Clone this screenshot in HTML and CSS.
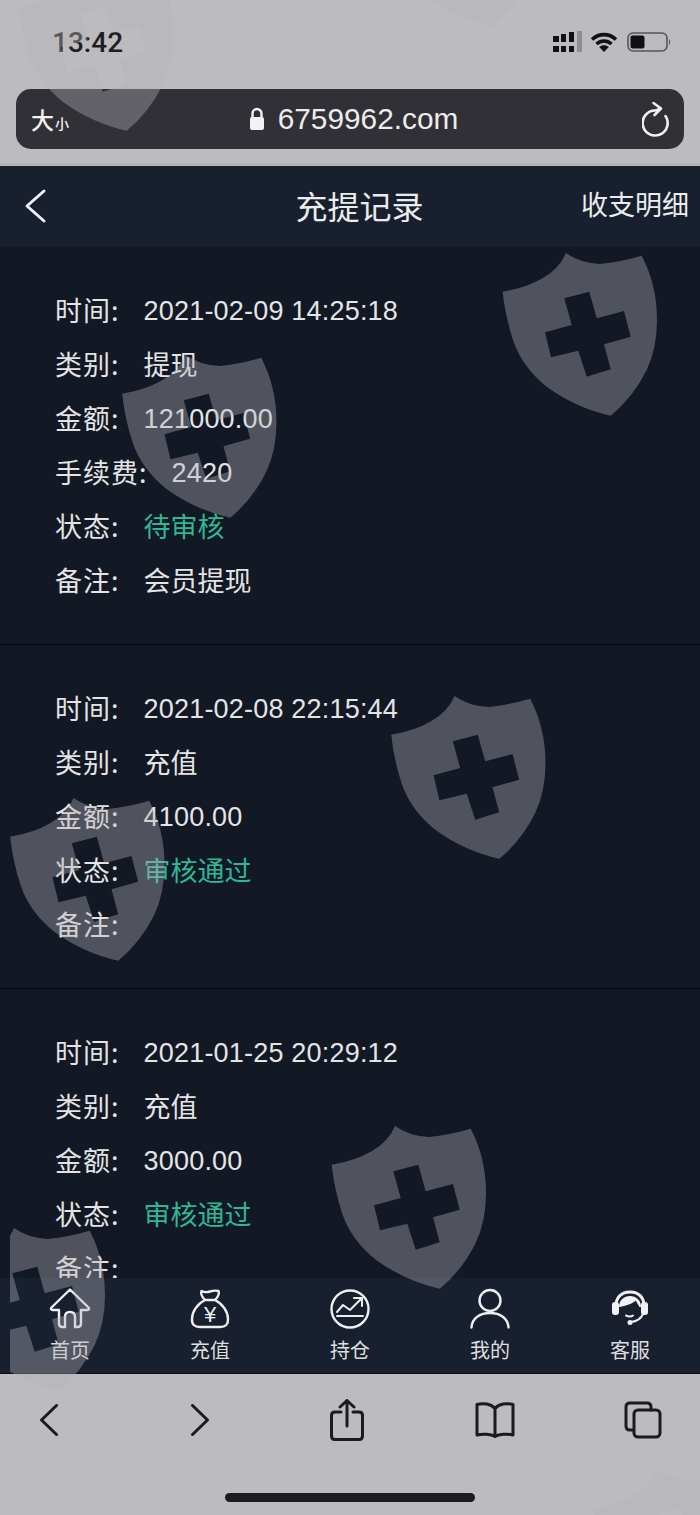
FILE: index.html
```html
<!DOCTYPE html>
<html lang="zh-CN">
<head>
<meta charset="utf-8">
<title>充提记录</title>
<link rel="stylesheet" href="styles.css">
</head>
<body>
<div class="phone">
  <div class="browser-top">
    <div class="status">
      <span class="clock">13:42</span>
      <div class="status-icons">
        <svg class="ic-signal" width="30" height="22" viewBox="0 0 30 22"><path class="solid" d="M0 5h6v6H0zM0 15h6v6H0zM8 3h5v8H8zM8 15h5v6H8zM16 1h5v10h-5zM16 15h5v6h-5z"/><path class="faint" d="M24 0h5v21h-5z"/></svg>
        <svg class="ic-wifi" width="28" height="22" viewBox="0 0 28 22"><path class="stroke-dark" d="M2 8.500C9 2 19 2 26 8.500M6.500 13C11 9 17 9 21.500 13"/><path class="solid" d="M14 21l-4.800-5c3-2.200 6.600-2.200 9.600 0z"/></svg>
        <svg class="ic-battery" width="44" height="22" viewBox="0 0 44 22"><rect class="bat-shell" x="1" y="2" width="39" height="18" rx="5"/><rect class="solid" x="3.500" y="4.500" width="14" height="13" rx="2"/><path class="faint-dark" d="M42 8v6c1.500-.6 1.500-5.400 0-6z"/></svg>
      </div>
    </div>
    <div class="urlbar">
      <span class="fontsize"><span class="fs-big">大</span><span class="fs-small">小</span></span>
      <div class="address">
        <svg width="16" height="24" viewBox="0 0 16 24"><path class="lock-arc" d="M3.500 11V6.500a4.500 4.500 0 0 1 9 0V11"/><rect class="white-fill" x="1" y="10" width="14" height="13" rx="2"/></svg>
        <span>6759962.com</span>
      </div>
      <svg class="reload" width="28" height="36" viewBox="0 0 28 36"><path class="line-white" d="M18.500 7.500C16.500 8 15 9.500 13 9.500A12.500 12.500 0 1 0 23.500 15"/><path class="line-white" d="M11.500 2l7.500 5.500-6.500 6.500"/></svg>
    </div>
  </div>

  <header class="topbar">
    <svg class="back" width="24" height="36" viewBox="0 0 24 36"><path class="line-white wide" d="M21 3L4 18l17 15"/></svg>
    <h1>充提记录</h1>
    <span class="topbar-link">收支明细</span>
  </header>

  <main class="records">
    <section class="record">
      <div class="row"><span class="label">时间:</span><span class="value">2021-02-09 14:25:18</span></div>
      <div class="row"><span class="label">类别:</span><span class="value cjk">提现</span></div>
      <div class="row"><span class="label">金额:</span><span class="value">121000.00</span></div>
      <div class="row"><span class="label">手续费:</span><span class="value">2420</span></div>
      <div class="row"><span class="label">状态:</span><span class="value cjk ok">待审核</span></div>
      <div class="row"><span class="label">备注:</span><span class="value cjk">会员提现</span></div>
    </section>
    <section class="record">
      <div class="row"><span class="label">时间:</span><span class="value">2021-02-08 22:15:44</span></div>
      <div class="row"><span class="label">类别:</span><span class="value cjk">充值</span></div>
      <div class="row"><span class="label">金额:</span><span class="value">4100.00</span></div>
      <div class="row"><span class="label">状态:</span><span class="value cjk ok">审核通过</span></div>
      <div class="row"><span class="label">备注:</span><span class="value"></span></div>
    </section>
    <section class="record">
      <div class="row"><span class="label">时间:</span><span class="value">2021-01-25 20:29:12</span></div>
      <div class="row"><span class="label">类别:</span><span class="value cjk">充值</span></div>
      <div class="row"><span class="label">金额:</span><span class="value">3000.00</span></div>
      <div class="row"><span class="label">状态:</span><span class="value cjk ok">审核通过</span></div>
      <div class="row"><span class="label">备注:</span><span class="value"></span></div>
    </section>
  </main>

  <nav class="tabbar">
    <div class="tab">
      <svg width="42" height="42" viewBox="0 0 42 42"><path class="tab-line" d="M21 1.500L2.500 19.500q-1.500 2 1 2.500H10V35.500q0 3.500 3.500 3.500H16V29q0-5 5-5t5 5v10h2.500q3.500 0 3.500-3.500V22h6.500q2.500-.5 1-2.500z"/></svg>
      <span>首页</span>
    </div>
    <div class="tab">
      <svg width="42" height="42" viewBox="0 0 42 42"><path class="tab-line" d="M12.500 3Q16 5 21 3.500T29.500 3Q31 7 26 12C34 16 39 24 39 31Q39.500 39 31 39H11Q2.500 39 3 31C3 24 8 16 16 12Q11 7 12.500 3zM16 12h10"/><text class="yen" x="21" y="34">¥</text></svg>
      <span>充值</span>
    </div>
    <div class="tab">
      <svg width="42" height="42" viewBox="0 0 42 42"><circle class="tab-line" cx="21" cy="21" r="18.500"/><path class="tab-line thin" d="M8 28h26M8 24l6-7 7 5 12-12M25 10h8v8"/></svg>
      <span>持仓</span>
    </div>
    <div class="tab">
      <svg width="42" height="42" viewBox="0 0 42 42"><circle class="tab-line" cx="21" cy="12.500" r="10.500"/><path class="tab-line" d="M2.500 39.500C3 30 11 25 21 25s18 5 18.500 14.500"/></svg>
      <span>我的</span>
    </div>
    <div class="tab">
      <svg width="42" height="42" viewBox="0 0 42 42"><path class="tab-line bold" d="M7 20C6 9 13 4 21 4s15 5 14 16"/><rect class="white-fill" x="3" y="14" width="7" height="13" rx="3"/><rect class="white-fill" x="32" y="14" width="7" height="13" rx="3"/><path class="white-fill" d="M10 19C10 12 15 8 21 8s11 4 11 11z"/><path class="head" d="M11 19C14 18 22 17 27 12.500 28 16 31 18 31 21 31 27 27 32 21 32S11 27 11 21z"/><path class="tab-line thin" d="M17 27.500q4 2 7 0M34 26q-3 7-12 8"/><circle class="white-fill" cx="21" cy="34.500" r="2.500"/></svg>
      <span>客服</span>
    </div>
  </nav>

  <div class="browser-bottom">
    <div class="tools">
      <svg class="tool-back" width="20" height="32" viewBox="0 0 20 32"><path class="line-dark" d="M17.500 1.500L2.500 16l15 14.500"/></svg>
      <svg class="tool-forward" width="20" height="32" viewBox="0 0 20 32"><path class="line-dark" d="M2.500 1.500l15 14.500-15 14.500"/></svg>
      <svg width="34" height="42" viewBox="0 0 34 42"><path class="line-dark" d="M11 13H5q-3.500 0-3.500 3.500V37Q1.500 40.500 5 40.500h24q3.500 0 3.500-3.500V16.500Q32.500 13 29 13h-6M17 27V2M10 8l7-6.500L24 8"/></svg>
      <svg width="40" height="36" viewBox="0 0 40 36"><path class="line-dark" d="M20 6.500C16 1.500 8 1 2 2.500V33c6-1.500 14-1 18 1.500 4-2.500 12-3 18-1.500V2.500C32 1 24 1.500 20 6.500zM20 6.500V34"/></svg>
      <svg width="38" height="38" viewBox="0 0 38 38"><path class="line-dark" d="M9 29H6q-4 0-4-4V6q0-4 4-4h17q4 0 4 4v3"/><rect class="line-dark" x="10" y="9" width="26" height="27" rx="4"/></svg>
    </div>
    <div class="home-indicator"></div>
  </div>

  <svg class="watermarks" width="700" height="1515" viewBox="0 0 700 1515" aria-hidden="true">
    <defs>
      <symbol id="shield" width="160" height="170" viewBox="0 0 160 170">
        <path fill-rule="evenodd" d="M66 3Q80 13 100 14q20-2 41.700-8.300Q157 35 157 70q0 28-10.300 50-14 28-36 45.700Q76 158 46.700 136.700 22 117 13 90 5 65 2.700 41.700 26 38 43 28 60 18 66 3zM64.300 48.300L89.300 41.700 96.700 68.300 124 61 130.700 86.700 104 94.300 110.700 119.300 86.700 126.700 78.300 100.700 51 107.300 45 82.300 71.700 75z"/>
      </symbol>
      <clipPath id="tile-edge"><rect x="10" y="1200" width="200" height="315"/></clipPath>
    </defs>
    <use href="#shield" x="16" y="-35"/>
    <use href="#shield" x="381" y="-139"/>
    <use href="#shield" x="500" y="250"/>
    <use href="#shield" x="119.500" y="352"/>
    <use href="#shield" x="388.500" y="693"/>
    <use href="#shield" x="7.500" y="795"/>
    <use href="#shield" x="329" y="1123"/>
    <g clip-path="url(#tile-edge)"><use href="#shield" x="-52" y="1225"/></g>
    <use href="#shield" x="591" y="1467"/>
  </svg>
</div>
</body>
</html>
```
FILE: styles.css
```css
* { box-sizing: border-box; }
html, body { margin: 0; padding: 0; }
body { background: #121824; font-family: "Liberation Sans", "Noto Sans CJK SC", sans-serif; }

.phone {
  position: relative;
  width: 700px;
  height: 1515px;
  overflow: hidden;
  display: flex;
  flex-direction: column;
}

/* Browser chrome, top */
.browser-top {
  height: 166px;
  background: #bcbbc0;
  border-bottom: 3px solid #b3b3b7;
  flex: none;
}
.status {
  height: 89px;
  padding: 0 29px 5px 52px;
  display: flex;
  align-items: center;
  justify-content: space-between;
}
.clock {
  font-family: Roboto, "Liberation Sans", sans-serif;
  font-size: 28px;
  font-weight: 500;
  color: #1f1f22;
}
.status-icons { display: flex; align-items: center; gap: 9px; }
.ic-signal { margin-right: -2px; }
.solid { fill: #111; }
.faint { fill: #8f8f93; }
.faint-dark { fill: #555; }
.stroke-dark { fill: none; stroke: #111; stroke-width: 3.6px; }
.bat-shell { fill: none; stroke: #555; stroke-width: 1.6px; }

.urlbar {
  height: 60px;
  margin: 0 16px;
  padding: 0 15px;
  border-radius: 15px;
  background: #313036;
  color: #f2f2f2;
  display: flex;
  align-items: center;
  justify-content: space-between;
}
.fontsize { display: flex; align-items: baseline; width: 40px; font-family: "Noto Sans CJK SC", sans-serif; font-weight: 500; }
.fs-big { font-size: 23px; }
.fs-small { font-size: 14px; margin-left: 1px; }
.address {
  display: flex;
  align-items: center;
  gap: 13px;
  margin-right: 6px;
  font-size: 29.800px;
  color: #ececec;
}
.lock-arc { fill: none; stroke: #f2f2f2; stroke-width: 2.4px; }
.white-fill { fill: #f2f2f2; }
.line-white { fill: none; stroke: #f0f0f0; stroke-width: 2.6px; stroke-linecap: round; stroke-linejoin: round; }
.line-white.wide { stroke-width: 3px; }
.reload { margin-right: -1px; }

/* Page header */
.topbar {
  height: 81px;
  flex: none;
  position: relative;
  background: #182030;
  color: #ececec;
  display: flex;
  align-items: center;
  justify-content: center;
  padding-bottom: 3px;
}
.topbar h1 {
  margin: 0 0 0 19px;
  font: 400 32px "Noto Sans CJK SC", sans-serif;
}
.back { position: absolute; left: 23px; top: 22px; }
.topbar-link {
  position: absolute;
  right: 11px;
  top: 18px;
  font: 400 27px "Noto Sans CJK SC", sans-serif;
}

/* Records */
.records { flex: 1; min-height: 0; overflow: hidden; background: #121824; }
.record {
  padding: 37px 0 36px 55px;
  border-bottom: 1px solid #02040a;
}
.row {
  height: 54px;
  display: flex;
  align-items: center;
  font-size: 27px;
  color: #e4e4e4;
}
.label {
  font-family: "Noto Sans CJK SC", sans-serif;
  font-size: 27px;
  margin-right: 24px;
  letter-spacing: 1px;
  position: relative;
  top: -2px;
}
.value { position: relative; top: .5px; letter-spacing: .2px; }
.value.cjk { font-family: "Noto Sans CJK SC", sans-serif; letter-spacing: 0; top: -2px; }
.ok { color: #2fb795; }

/* Tab bar */
.tabbar {
  height: 96px;
  flex: none;
  background: #182030;
  border-bottom: 1px solid #0b0c18;
  display: grid;
  grid-template-columns: repeat(5, 1fr);
}
.tab {
  display: flex;
  flex-direction: column;
  align-items: center;
  padding-top: 10px;
  color: #dedede;
  font: 400 20px/28px "Noto Sans CJK SC", sans-serif;
}
.tab svg { display: block; margin-bottom: 6px; }
.tab-line { fill: none; stroke: #efefef; stroke-width: 2.4px; stroke-linejoin: round; stroke-linecap: round; }
.tab-line.thin { stroke-width: 2px; }
.tab-line.bold { stroke-width: 3px; }
.head { fill: #182030; }
.yen { fill: #efefef; font-size: 22px; text-anchor: middle; font-family: "Liberation Sans", sans-serif; }

/* Browser chrome, bottom */
.browser-bottom {
  flex: none;
  height: 141px;
  background: #bcbbc0;
  display: flex;
  flex-direction: column;
  align-items: center;
}
.tools {
  width: 740px;
  margin: 0 -17px 27px -23px;
  height: 92px;
  flex: none;
  display: grid;
  grid-template-columns: repeat(5, 148px);
  justify-items: center;
  align-items: center;
}
.tool-back { margin-right: 4px; }
.tool-forward { margin-left: 2px; }
.line-dark { fill: none; stroke: #1b1b1d; stroke-width: 3px; stroke-linecap: round; stroke-linejoin: round; }
.home-indicator {
  width: 250px;
  height: 9px;
  border-radius: 5px;
  background: #1c1c1e;
}

/* Watermark layer, drawn over everything */
.watermarks {
  position: absolute;
  left: 0;
  top: 0;
  pointer-events: none;
  fill: rgba(180, 180, 184, .385);
}
```
